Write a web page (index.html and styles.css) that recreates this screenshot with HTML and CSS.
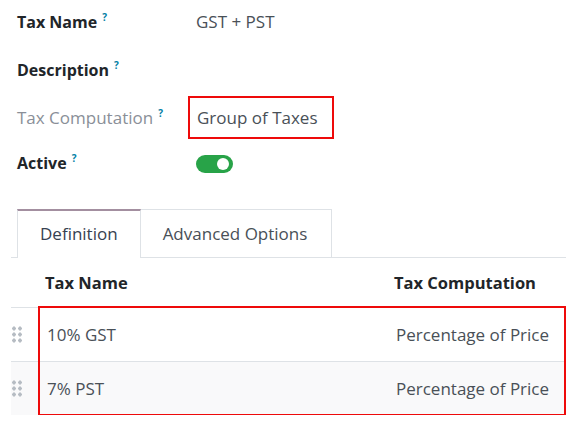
FILE: index.html
```html
<!DOCTYPE html>
<html lang="en">
<head>
    <meta charset="UTF-8">
    <meta name="viewport" content="width=device-width, initial-scale=1.0">
    <title>Tax - GST + PST</title>
    <link rel="stylesheet" href="styles.css">
</head>
<body>

    <div class="form">
        <div class="field">
            <label class="field-label">Tax Name<sup class="help">?</sup></label>
            <div class="field-value">GST + PST</div>
        </div>
        <div class="field">
            <label class="field-label">Description<sup class="help">?</sup></label>
            <div class="field-value"></div>
        </div>
        <div class="field">
            <label class="field-label muted">Tax Computation<sup class="help">?</sup></label>
            <div class="field-value"><span class="marked">Group of Taxes</span></div>
        </div>
        <div class="field short">
            <label class="field-label">Active<sup class="help">?</sup></label>
            <div class="field-value"><span class="toggle"><span class="knob"></span></span></div>
        </div>
    </div>

    <div class="notebook">
        <ul class="tabs">
            <li class="tab active">Definition</li>
            <li class="tab">Advanced Options</li>
        </ul>

        <div class="list">
            <div class="list-head">
                <div class="cell handle-col"></div>
                <div class="cell">Tax Name</div>
                <div class="cell">Tax Computation</div>
            </div>
            <div class="list-body">
                <div class="list-row">
                    <div class="cell handle-col"><span class="handle"></span></div>
                    <div class="cell">10% GST</div>
                    <div class="cell">Percentage of Price</div>
                </div>
                <div class="list-row odd">
                    <div class="cell handle-col"><span class="handle"></span></div>
                    <div class="cell">7% PST</div>
                    <div class="cell">Percentage of Price</div>
                </div>
                <!-- red frame round the child taxes -->
                <div class="mark-box"></div>
            </div>
        </div>
    </div>

</body>
</html>
```

FILE: styles.css
```css
body {
    font-family: "Open Sans", "Noto Sans", Arial, sans-serif;
    font-size: 17px;
    color: #495057;
    margin: 0;
    padding: 0 15px 0 0;
    background: #fff;
}

/* top form */
.form {
    margin-top: -3px;
    padding-left: 17px;
}
.field {
    display: grid;
    grid-template-columns: 179px 1fr;
    align-items: center;
    height: 48px;
}
.field.short {
    height: 42px;
}
.field-label {
    font-weight: 700;
    font-size: 16px;
    color: #212529;
}
.field-label.muted {
    font-weight: 400;
    font-size: 17px;
    color: #8a8f98;
}
.help {
    color: #0180a5;
    font-size: 10px;
    font-weight: 700;
    margin-left: 5px;
    vertical-align: 7px;
}
.field-value {
    color: #495057;
}
.marked {
    display: inline-block;
    margin-left: -8px;
    padding: 8px 14px 8px 7px;
    border: 2px solid #ee0a0a;
    line-height: 23px;
}
.toggle {
    display: inline-block;
    position: relative;
    width: 37px;
    height: 18px;
    border-radius: 9px;
    background: #28a348;
    vertical-align: middle;
}
.knob {
    position: absolute;
    top: 3px;
    right: 4px;
    width: 12px;
    height: 12px;
    border-radius: 50%;
    background: #fff;
}

/* notebook */
.notebook {
    margin: 26px 0 0 11px;
}
.tabs {
    display: flex;
    list-style: none;
    margin: 0;
    padding: 0 0 0 6px;
    border-bottom: 1px solid #dee2e6;
}
.tab {
    height: 47px;
    line-height: 47px;
    padding: 0 22px;
    border: 1px solid #dee2e6;
    border-bottom: none;
    color: #495057;
    margin-bottom: -1px;
    background: #fff;
}
.tab + .tab {
    border-left: none;
    padding-right: 24px;
}
.tab.active {
    border-top: 2px solid #a38fa0;
    height: 46px;
    line-height: 46px;
    padding-bottom: 1px;
    color: #374151;
}

/* one2many list */
.list-head, .list-row {
    display: grid;
    grid-template-columns: 27px 349px 1fr;
    align-items: center;
}
.list-head {
    height: 49px;
    font-weight: 700;
    font-size: 16.5px;
    color: #212529;
}
.list-head .cell {
    padding-left: 7px;
}
.list-body {
    position: relative;
}
.list-row {
    height: 53px;
    border-top: 1px solid #dee2e6;
    background: #fff;
}
.list-row.odd {
    background: #f9f9fa;
}
.list-row .cell {
    padding-left: 9px;
}
.list-row .handle-col {
    padding-left: 1px;
}
.handle {
    display: block;
    width: 10px;
    height: 17px;
    background-image: radial-gradient(circle, #b6bcc3 1.6px, transparent 1.7px);
    background-size: 6px 6px;
    background-position: -1px -0.5px;
}
.mark-box {
    position: absolute;
    left: 27px;
    top: -1px;
    right: 0;
    bottom: -1px;
    border: 2px solid #ee0a0a;
}
```
